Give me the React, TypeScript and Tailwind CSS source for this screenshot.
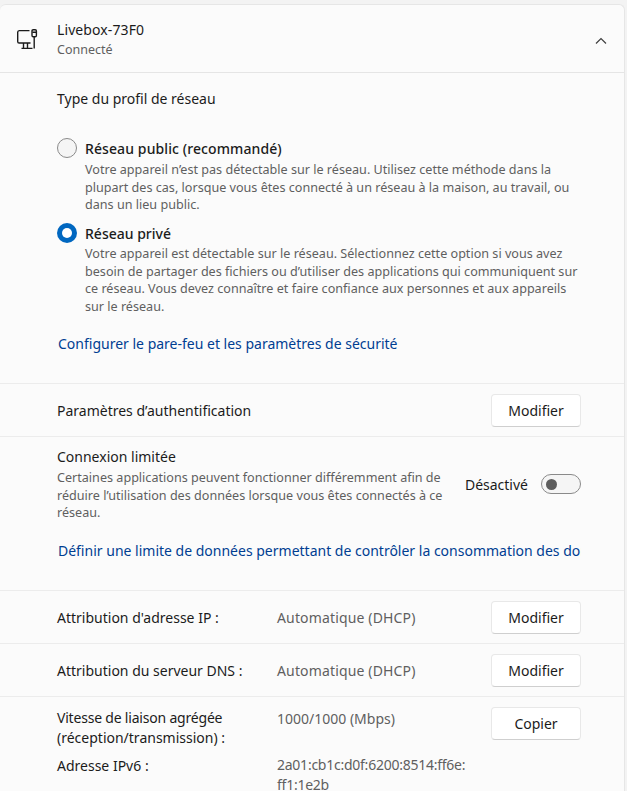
import React from "react";

function Btn({ label }: { label: string }) {
  return (
    <button className="w-[90px] h-[33px] shrink-0 rounded-[4px] border border-[#e8e8e8] border-b-[#cfcfcf] bg-white text-[14px] text-[#1b1b1b] flex items-center justify-center">
      {label}
    </button>
  );
}

function Radio({ on }: { on?: boolean }) {
  return on ? (
    <span className="w-5 h-5 rounded-full bg-[#0067c0] flex items-center justify-center shrink-0">
      <span className="w-[10px] h-[10px] rounded-full bg-white block" />
    </span>
  ) : (
    <span className="w-5 h-5 rounded-full border border-[#8a8a8a] bg-[#f5f5f5] block shrink-0" />
  );
}

export default function App() {
  return (
    <div className="w-[627px] h-[791px] overflow-hidden bg-[#f3f3f3] pt-[4px] font-['Noto_Sans',sans-serif] text-[#1b1b1b] text-[14px]">
      <div className="h-[787px] mr-[2px] bg-[#fbfbfb] border border-[#e6e6e6] border-l-0 border-b-0 rounded-t-[6px] overflow-hidden">
        {/* Header */}
        <div className="h-[68px] border-b border-[#e5e5e5] flex items-center pl-[17px] pr-[18px]">
          <svg width="21" height="21" viewBox="0 0 21 21" fill="none" stroke="#1b1b1b" strokeWidth="1.4" className="shrink-0 mr-[19px] mt-[2px]">
            <path d="M12.5 1.6H2.2A1.6 1.6 0 0 0 .7 3.2v9.2A1.6 1.6 0 0 0 2.2 14h11.3" />
            <path d="M4.5 19.4h11M6.5 14v5.4M10.5 14v5.4" />
            <rect x="15" y=".7" width="4.4" height="7" rx="1.2" />
            <path d="M15.4 3.2h3.6M17.2 7.7v11.7" />
          </svg>
          <div className="flex-1 flex flex-col pt-[3px]">
            <span className="leading-[20px] text-[14px] tracking-[0.1px]">Livebox-73F0</span>
            <span className="leading-[20px] text-[12.5px] text-[#5f5f5f]">Connecté</span>
          </div>
          <svg width="12" height="8" viewBox="0 0 12 8" fill="none" stroke="#3f3f3f" strokeWidth="1.2" className="mt-[4px] mr-[-1px]">
            <path d="M1 6.5 6 1.5l5 5" />
          </svg>
        </div>

        {/* Profile */}
        <div className="h-[311px] border-b border-[#ececec] pl-[57px] pt-[16px]">
          <div className="leading-[20px]">Type du profil de réseau</div>
          <div className="flex mt-[29px]">
            <div className="w-[28px]"><Radio /></div>
            <div className="flex flex-col">
              <span className="leading-[20px] font-medium mt-px tracking-[0.1px]">Réseau public (recommandé)</span>
              <p className="text-[12.6px] leading-[17.6px] text-[#5f5f5f] mt-[2px] whitespace-nowrap">
                Votre appareil n’est pas détectable sur le réseau. Utilisez cette méthode dans la<br />
                plupart des cas, lorsque vous êtes connecté à un réseau à la maison, au travail, ou<br />
                dans un lieu public.
              </p>
            </div>
          </div>
          <div className="flex mt-[9px]">
            <div className="w-[28px]"><Radio on /></div>
            <div className="flex flex-col">
              <span className="leading-[20px] font-medium mt-px">Réseau privé</span>
              <p className="text-[12.6px] leading-[17.8px] text-[#5f5f5f] mt-[1px] whitespace-nowrap">
                Votre appareil est détectable sur le réseau. Sélectionnez cette option si vous avez<br />
                besoin de partager des fichiers ou d’utiliser des applications qui communiquent sur<br />
                ce réseau. Vous devez connaître et faire confiance aux personnes et aux appareils<br />
                sur le réseau.
              </p>
            </div>
          </div>
          <a className="block mt-[18px] leading-[20px] text-[#003e92] ml-px">Configurer le pare-feu et les paramètres de sécurité</a>
        </div>

        {/* Auth */}
        <div className="h-[53px] border-b border-[#ececec] flex items-center justify-between pl-[57px] pr-[43px]">
          <span className="mt-[1px]">Paramètres d’authentification</span>
          <Btn label="Modifier" />
        </div>

        {/* Metered */}
        <div className="h-[154px] border-b border-[#ececec] pl-[57px] pt-[10px] pr-[43px]">
          <div className="flex items-center justify-between">
            <div className="flex flex-col">
              <span className="leading-[20px]">Connexion limitée</span>
              <p className="text-[12.6px] leading-[17.6px] text-[#5f5f5f] mt-[2px] whitespace-nowrap">
                Certaines applications peuvent fonctionner différemment afin de<br />
                réduire l’utilisation des données lorsque vous êtes connectés à ce<br />
                réseau.
              </p>
            </div>
            <div className="flex items-center gap-[13px]">
              <span>Désactivé</span>
              <span className="w-[40px] h-[20px] rounded-full border border-[#8a8a8a] bg-[#f5f5f5] flex items-center pl-[4px]">
                <span className="w-[11px] h-[11px] rounded-full bg-[#5d5d5d] block" />
              </span>
            </div>
          </div>
          <div className="mt-[19px] ml-px overflow-hidden whitespace-nowrap leading-[20px] text-[#003e92]">
            Définir une limite de données permettant de contrôler la consommation des données sur ce réseau
          </div>
        </div>

        {/* IP */}
        <div className="h-[53px] border-b border-[#ececec] flex items-center pl-[57px] pr-[43px]">
          <span className="w-[220px] mt-[1px]">Attribution d'adresse IP :</span>
          <span className="flex-1 mt-[1px] text-[#5f5f5f] tracking-[0.15px]">Automatique (DHCP)</span>
          <Btn label="Modifier" />
        </div>
        <div className="h-[53px] border-b border-[#ececec] flex items-center pl-[57px] pr-[43px]">
          <span className="w-[220px] mt-[1px]">Attribution du serveur DNS :</span>
          <span className="flex-1 mt-[1px] text-[#5f5f5f] tracking-[0.15px]">Automatique (DHCP)</span>
          <Btn label="Modifier" />
        </div>

        <div className="flex pl-[57px] pr-[43px] pt-[11px]">
          <div className="w-[220px] leading-[20px]">
            <div className="tracking-[-0.2px]">Vitesse de liaison agrégée</div>
            <div>(réception/transmission) :</div>
            <div className="mt-[8px]">Adresse IPv6 :</div>
          </div>
          <div className="flex-1 leading-[20px] text-[#5f5f5f]">
            <div className="mt-px">1000/1000 (Mbps)</div>
            <div className="mt-[26px] tracking-[-0.25px]">2a01:cb1c:d0f:6200:8514:ff6e:</div>
            <div className="tracking-[-0.25px]">ff1:1e2b</div>
          </div>
          <div className="-mt-[1px]"><Btn label="Copier" /></div>
        </div>
      </div>
    </div>
  );
}
